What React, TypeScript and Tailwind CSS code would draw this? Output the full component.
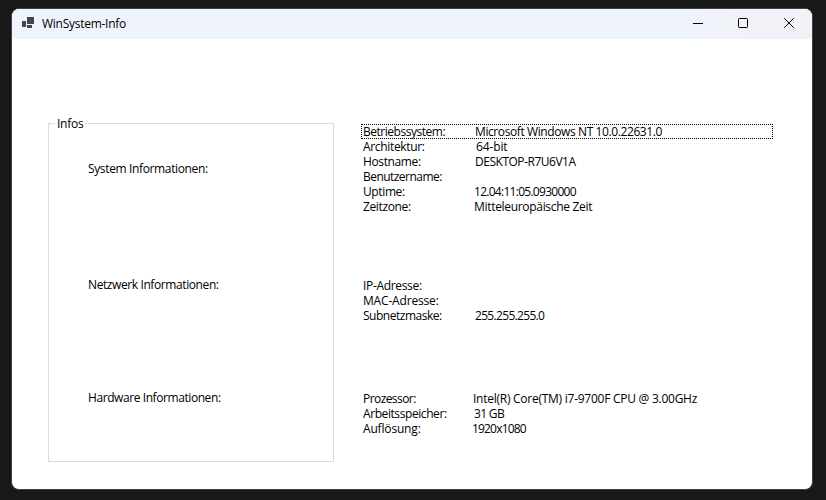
type Item = {
  label: string;
  labelClass: string;
  value?: string;
  valueClass?: string;
  focused?: boolean;
};

const system: Item[] = [
  { label: "Betriebssystem:", labelClass: "tracking-[-0.47px]", value: "Microsoft Windows NT 10.0.22631.0", valueClass: "ml-1 tracking-[-0.4px]", focused: true },
  { label: "Architektur:", labelClass: "tracking-[-0.33px]", value: "64-bit", valueClass: "ml-[5px] tracking-[-0.122px]" },
  { label: "Hostname:", labelClass: "tracking-[-0.37px]", value: "DESKTOP-R7U6V1A", valueClass: "ml-1 tracking-[-0.48px]" },
  { label: "Benutzername:", labelClass: "tracking-[-0.54px]" },
  { label: "Uptime:", labelClass: "tracking-[-0.38px]", value: "12.04:11:05.0930000", valueClass: "ml-[3px] tracking-[-0.72px]" },
  { label: "Zeitzone:", labelClass: "tracking-[-0.37px]", value: "Mitteleuropäische Zeit", valueClass: "ml-[3px] tracking-[-0.31px]" },
];

const network: Item[] = [
  { label: "IP-Adresse:", labelClass: "tracking-[-0.33px]" },
  { label: "MAC-Adresse:", labelClass: "tracking-[-0.17px]" },
  { label: "Subnetzmaske:", labelClass: "tracking-[-0.48px]", value: "255.255.255.0", valueClass: "ml-1 tracking-[-0.68px]" },
];

const hardware: Item[] = [
  { label: "Prozessor:", labelClass: "tracking-[-0.57px]", value: "Intel(R) Core(TM) i7-9700F CPU @ 3.00GHz", valueClass: "ml-0.5 tracking-[-0.257px]" },
  { label: "Arbeitsspeicher:", labelClass: "tracking-[-0.42px]", value: "31 GB", valueClass: "ml-[3px] tracking-[-0.66px]" },
  { label: "Auflösung:", labelClass: "tracking-[-0.17px]", value: "1920x1080", valueClass: "ml-px tracking-[-0.82px]" },
];

function InfoList({ items }: { items: Item[] }) {
  return (
    <ul className="w-[412px]">
      {items.map((item) => (
        <li
          key={item.label}
          className={
            item.focused
              ? "flex h-[15px] outline-1 -outline-offset-1 outline-dotted outline-black"
              : "flex h-[15px]"
          }
        >
          <span className={`w-[110px] shrink-0 pl-0.5 ${item.labelClass}`}>{item.label}</span>
          {item.value && <span className={item.valueClass}>{item.value}</span>}
        </li>
      ))}
    </ul>
  );
}

function TitleBar() {
  return (
    <header className="flex h-[30px] items-start bg-linear-to-r from-[#eff3fb] from-85% to-[#f1f2f7] to-92%">
      <svg className="mt-2 ml-[10px] h-[11px] w-3" viewBox="0 0 12 11" fill="#454545" shapeRendering="crispEdges">
        <rect x="0" y="4" width="4" height="6" />
        <rect x="5" y="0" width="7" height="7" />
        <rect x="5" y="8" width="5" height="3" />
      </svg>
      <h1 className="mt-[7px] ml-2 leading-[15px] tracking-[-0.27px]">WinSystem-Info</h1>
      <div className="ml-auto flex">
        <button className="flex h-[29px] w-[45px] items-center pl-[17px]" aria-label="Minimieren">
          <svg className="h-[11px] w-[11px]" viewBox="0 0 11 11" stroke="#000">
            <path d="M0 5.5h10" />
          </svg>
        </button>
        <button className="flex h-[29px] w-[46px] items-center pl-[17px]" aria-label="Maximieren">
          <svg className="h-[11px] w-[11px]" viewBox="0 0 11 11" stroke="#000" fill="none">
            <rect x="0.5" y="0.5" width="9" height="9" rx="0.8" />
          </svg>
        </button>
        <button className="flex h-[29px] w-[45px] items-center pl-[17px]" aria-label="Schließen">
          <svg className="h-[11px] w-[11px]" viewBox="0 0 11 11" stroke="#000">
            <path d="M0.2 0.2l9.6 9.6M9.8 0.2l-9.6 9.6" />
          </svg>
        </button>
      </div>
    </header>
  );
}

export default function App() {
  return (
    <div className="h-[500px] w-[826px] overflow-hidden bg-[#181818] pt-2 pl-[11px] font-['Open_Sans',sans-serif] text-[12px] leading-[15px] whitespace-nowrap text-black">
      <div className="h-[482px] w-[802px] overflow-hidden rounded-lg border border-[#414141] bg-white">
        <TitleBar />
        <main className="flex pl-9">
          <fieldset className="mt-[77px] h-[346px] w-[286px] border border-[#dcdcdc] pl-[39px]">
            <legend className="-ml-[33px] h-[15px] pr-0.5 pl-0.5 tracking-[-0.25px]">Infos</legend>
            <p className="mt-[30px] tracking-[-0.36px]">System Informationen:</p>
            <p className="mt-[101px] tracking-[-0.4px]">Netzwerk Informationen:</p>
            <p className="mt-[98px] tracking-[-0.42px]">Hardware Informationen:</p>
          </fieldset>
          <div className="mt-[85px] ml-[27px]">
            <InfoList items={system} />
            <div className="mt-16">
              <InfoList items={network} />
            </div>
            <div className="mt-[68px]">
              <InfoList items={hardware} />
            </div>
          </div>
        </main>
      </div>
    </div>
  );
}
